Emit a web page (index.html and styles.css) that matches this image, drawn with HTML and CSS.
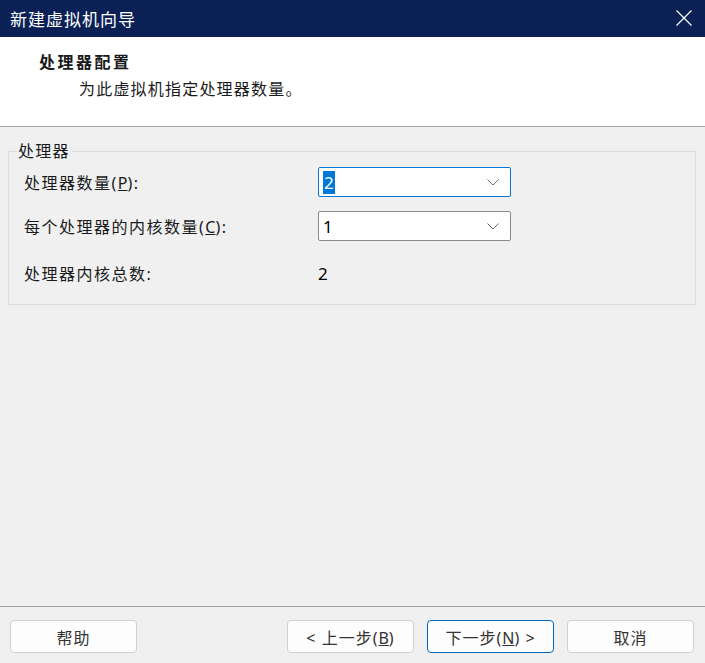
FILE: index.html
```html
<!DOCTYPE html>
<html lang="zh-CN">

<head>
    <meta charset="UTF-8">
    <meta name="viewport" content="width=device-width, initial-scale=1.0">
    <title>新建虚拟机向导</title>
    <link rel="stylesheet" href="styles.css">
</head>

<body>
    <div class="wizard">
        <!-- Window title bar -->
        <div class="titlebar">
            <span class="title">新建虚拟机向导</span>
            <svg class="close" width="16" height="16" viewBox="0 0 16 16">
                <path d="M0.5 0.5 L15.5 15.5 M15.5 0.5 L0.5 15.5" stroke="#fff" stroke-width="1.2" fill="none" />
            </svg>
        </div>

        <!-- Page heading -->
        <div class="header">
            <div class="header-title">处理器配置</div>
            <div class="header-sub">为此虚拟机指定处理器数量。</div>
        </div>

        <!-- Page body -->
        <div class="content">
            <fieldset class="group">
                <legend>处理器</legend>

                <div class="row">
                    <span class="label">处理器数量(<u>P</u>):</span>
                    <div class="combo focused">
                        <span class="value"><span class="selected">2</span></span>
                        <svg class="chevron" width="12" height="7" viewBox="0 0 12 7">
                            <path d="M0.5 0.5 L6 6 L11.5 0.5" stroke="#6e6e6e" stroke-width="1" fill="none" />
                        </svg>
                    </div>
                </div>

                <div class="row">
                    <span class="label">每个处理器的内核数量(<u>C</u>):</span>
                    <div class="combo">
                        <span class="value">1</span>
                        <svg class="chevron" width="12" height="7" viewBox="0 0 12 7">
                            <path d="M0.5 0.5 L6 6 L11.5 0.5" stroke="#6e6e6e" stroke-width="1" fill="none" />
                        </svg>
                    </div>
                </div>

                <div class="row total">
                    <span class="label">处理器内核总数:</span>
                    <span class="total-value">2</span>
                </div>
            </fieldset>
        </div>

        <!-- Navigation buttons -->
        <div class="footer">
            <button class="btn">帮助</button>
            <div class="spacer"></div>
            <button class="btn">&lt; 上一步(<u>B</u>)</button>
            <button class="btn primary">下一步(<u>N</u>) &gt;</button>
            <button class="btn">取消</button>
        </div>
    </div>
</body>

</html>
```

FILE: styles.css
```css
/* Whole dialog fills the window */
html,
body {
    margin: 0;
    height: 100%;
}

body {
    font-family: "Noto Sans", "Noto Sans CJK SC", sans-serif;
    font-size: 16px;
    color: #1a1a1a;
    background-color: #f0f0f0;
}

.wizard {
    display: flex;
    flex-direction: column;
    height: 100%;
}

/* Title bar */
.titlebar {
    height: 37px;
    flex: none;
    display: flex;
    align-items: center;
    justify-content: space-between;
    padding: 0 13px 0 10px;
    background-color: #0b2155;
    color: #fff;
}

.title {
    font-size: 17px;
    letter-spacing: 1px;
}

.close {
    margin-top: -1px;
}

/* White heading area */
.header {
    height: 90px;
    flex: none;
    box-sizing: border-box;
    padding: 14px 0 0 0;
    background-color: #fff;
    border-bottom: 1px solid #a0a0a0;
}

.header-title {
    margin-left: 39px;
    font-weight: bold;
    font-size: 16px;
    letter-spacing: 2.5px;
    line-height: 22px;
}

.header-sub {
    margin: 5px 0 0 79px;
    letter-spacing: 1.2px;
    line-height: 22px;
}

/* Body */
.content {
    flex: 1;
    padding: 14px 9px 0 8px;
}

.group {
    margin: 0;
    padding: 6px 0 16px 8px;
    border: 1px solid #dcdcdc;
}

.group legend {
    padding: 0 2px 0 1px;
    line-height: 20px;
    letter-spacing: 1.2px;
}

.row {
    display: flex;
    align-items: center;
    height: 30px;
    margin-left: 7px;
}

.row + .row {
    margin-top: 14px;
}

.row.total {
    margin-top: 17px;
}

.label {
    width: 294px;
    letter-spacing: 1.5px;
}

.label u {
    letter-spacing: 0;
}

/* Drop-down boxes */
.combo {
    width: 193px;
    height: 30px;
    box-sizing: border-box;
    display: flex;
    align-items: center;
    justify-content: space-between;
    padding: 0 11px 0 4px;
    background-color: #fff;
    border: 1px solid #8a8a8a;
    border-radius: 2px;
}

.combo.focused {
    border-color: #0078d7;
}

.value {
    font-size: 17px;
    color: #000;
}

.selected {
    background-color: #0078d7;
    color: #fff;
    padding: 0 1px;
}

.total-value {
    font-size: 17px;
    color: #000;
}

/* Bottom button row */
.footer {
    height: 57px;
    flex: none;
    box-sizing: border-box;
    display: flex;
    align-items: flex-start;
    gap: 13px;
    padding: 13px 11px 0 10px;
    border-top: 1px solid #a0a0a0;
}

.spacer {
    flex: 1;
}

.btn {
    width: 127px;
    height: 33px;
    font-family: inherit;
    font-size: 16px;
    color: #333;
    letter-spacing: 1px;
    background-color: #fdfdfd;
    border: 1px solid #d0d0d0;
    border-radius: 4px;
    padding: 0;
}

.btn u {
    letter-spacing: 0;
}

.btn.primary {
    border-color: #0067c0;
}
```
